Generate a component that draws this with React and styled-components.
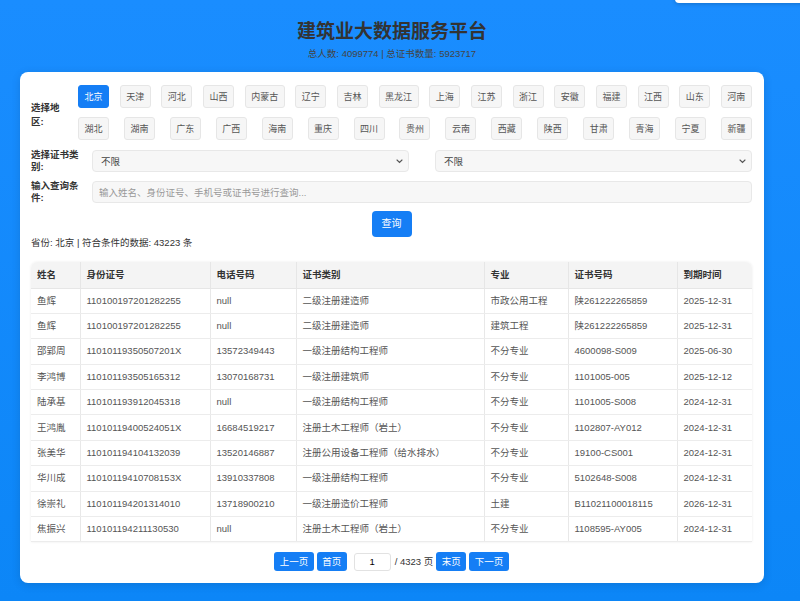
import styled, { createGlobalStyle } from 'styled-components';

const GlobalStyle = createGlobalStyle`
  html, body {
    margin: 0;
    padding: 0;
  }
  body {
    font-family: "Liberation Sans", "Noto Sans CJK SC", sans-serif;
    background: linear-gradient(180deg, #1a8dff 0%, #0c86f7 100%);
    min-height: 601px;
    overflow: hidden;
  }
  * {
    box-sizing: border-box;
  }
`;

const Page = styled.div`
  width: 784px;
  padding: 18px 20px 0;
`;

const Toast = styled.div`
  position: fixed;
  top: -30px;
  right: -10px;
  width: 135px;
  height: 33px;
  background: #fff;
  border-radius: 4px;
  box-shadow: 0 1px 4px rgba(0, 0, 0, 0.2);
`;

const Header = styled.header`
  text-align: center;
`;

const Title = styled.h1`
  margin: 0;
  font-size: 19px;
  line-height: 28px;
  font-weight: 700;
  color: #333;
`;

const Subtitle = styled.p`
  margin: 1px 0 0;
  font-size: 9.5px;
  line-height: 14px;
  color: #444;
`;

const Card = styled.main`
  margin-top: 11px;
  background: #fff;
  border-radius: 8px;
  box-shadow: 0 2px 10px rgba(0, 0, 0, 0.12);
  padding: 13px 12px 12px 11px;
`;

const FormRow = styled.div`
  display: flex;
  align-items: center;
  margin-bottom: ${(p) => p.$mb}px;
`;

const Label = styled.label`
  flex: 0 0 ${(p) => p.$w}px;
  margin-right: ${(p) => p.$gap}px;
  padding-top: ${(p) => p.$pt || 0}px;
  font-size: 9.5px;
  line-height: ${(p) => p.$lh || 12}px;
  font-weight: 700;
  color: #333;
`;

const RegionList = styled.div`
  flex: 1;
  display: flex;
  flex-wrap: wrap;
  justify-content: space-between;
  gap: 9px 9.5px;
`;

const RegionButton = styled.button`
  height: 23px;
  padding: 0 5.5px;
  font-family: inherit;
  font-size: 9px;
  border-radius: 3px;
  border: 1px solid ${(p) => (p.$active ? '#157ef5' : '#e6e6e6')};
  background: ${(p) => (p.$active ? '#157ef5' : '#f6f6f6')};
  color: ${(p) => (p.$active ? '#fff' : '#555')};
  cursor: pointer;
`;

const SelectGroup = styled.div`
  flex: 1;
  display: flex;
  gap: 26px;
`;

const SelectBox = styled.div`
  position: relative;
  flex: 1;
  height: 22px;
  display: flex;
  align-items: center;
  padding-left: 8px;
  background: #f7f7f7;
  border: 1px solid #e8e8e8;
  border-radius: 4px;
  font-size: 9.5px;
  color: #444;

  svg {
    position: absolute;
    right: 5px;
    top: 8px;
  }
`;

const SearchInput = styled.input`
  flex: 1;
  height: 22px;
  padding: 0 6px;
  font-family: inherit;
  font-size: 9.5px;
  background: #f7f7f7;
  border: 1px solid #e8e8e8;
  border-radius: 4px;
  outline: none;

  &::placeholder {
    color: #999;
  }
`;

const SearchRow = styled.div`
  display: flex;
  justify-content: center;
`;

const PrimaryButton = styled.button`
  height: ${(p) => p.$h || 26}px;
  padding: 0 ${(p) => p.$px || 10}px;
  font-family: inherit;
  font-size: ${(p) => p.$fs || 10}px;
  line-height: 1;
  color: #fff;
  background: #157ef5;
  border: none;
  border-radius: ${(p) => p.$r || 4}px;
  cursor: pointer;
`;

const Summary = styled.div`
  font-size: 9.5px;
  line-height: 12px;
  color: #333;
`;

const TableWrap = styled.div`
  margin-top: 13px;
  border-radius: 6px 6px 0 0;
  overflow: hidden;
  box-shadow: 0 0 3px rgba(0, 0, 0, 0.08);
`;

const Table = styled.table`
  width: 100%;
  border-collapse: collapse;
  table-layout: fixed;
  font-size: 9.5px;
  line-height: 12px;
`;

const Th = styled.th`
  height: 26px;
  padding: 0 6px;
  text-align: left;
  font-weight: 700;
  color: #333;
  background: #f4f4f4;
  border-right: 1px solid #e6e6e6;
  border-bottom: 1px solid #e6e6e6;

  &:last-child {
    border-right: none;
  }
`;

const Td = styled.td`
  height: 25.4px;
  padding: 0 6px;
  color: #555;
  white-space: nowrap;
  border-right: 1px solid #e8e8e8;
  border-bottom: 1px solid #ececec;
`;

const Pager = styled.div`
  display: flex;
  justify-content: center;
  align-items: center;
  gap: 3px;
  margin-top: 10px;
  font-size: 9.5px;
  line-height: 12px;
  color: #333;
`;

const PageInput = styled.input`
  width: 37px;
  height: 18px;
  margin: 0 1px 0 4px;
  padding: 0;
  text-align: center;
  font-family: inherit;
  font-size: 9.5px;
  border: 1px solid #e2e2e2;
  border-radius: 3px;
  outline: none;
`;

const regions = [
  '北京', '天津', '河北', '山西', '内蒙古', '辽宁', '吉林', '黑龙江', '上海', '江苏', '浙江',
  '安徽', '福建', '江西', '山东', '河南', '湖北', '湖南', '广东', '广西', '海南', '重庆',
  '四川', '贵州', '云南', '西藏', '陕西', '甘肃', '青海', '宁夏', '新疆',
];

const columns = [
  ['姓名', 49], ['身份证号', 130], ['电话号码', 86], ['证书类别', 188],
  ['专业', 84], ['证书号码', 109], ['到期时间', 75],
];

const rows = [
  ['鱼辉', '110100197201282255', 'null', '二级注册建造师', '市政公用工程', '陕261222265859', '2025-12-31'],
  ['鱼辉', '110100197201282255', 'null', '二级注册建造师', '建筑工程', '陕261222265859', '2025-12-31'],
  ['邵郢周', '11010119350507201X', '13572349443', '一级注册结构工程师', '不分专业', '4600098-S009', '2025-06-30'],
  ['李鸿博', '110101193505165312', '13070168731', '一级注册建筑师', '不分专业', '1101005-005', '2025-12-12'],
  ['陆承基', '110101193912045318', 'null', '一级注册结构工程师', '不分专业', '1101005-S008', '2024-12-31'],
  ['王鸿胤', '11010119400524051X', '16684519217', '注册土木工程师（岩土）', '不分专业', '1102807-AY012', '2024-12-31'],
  ['张美华', '110101194104132039', '13520146887', '注册公用设备工程师（给水排水）', '不分专业', '19100-CS001', '2024-12-31'],
  ['华川成', '11010119410708153X', '13910337808', '一级注册结构工程师', '不分专业', '5102648-S008', '2024-12-31'],
  ['徐崇礼', '110101194201314010', '13718900210', '一级注册造价工程师', '土建', 'B11021100018115', '2026-12-31'],
  ['焦振兴', '110101194211130530', 'null', '注册土木工程师（岩土）', '不分专业', '1108595-AY005', '2024-12-31'],
];

function Chevron() {
  return (
    <svg width="7" height="5" viewBox="0 0 7 5" fill="none">
      <path d="M1 1l2.5 2.5L6 1" stroke="#555" strokeWidth="1.1" strokeLinecap="round" />
    </svg>
  );
}

export default function App() {
  return (
    <>
      <GlobalStyle />
      <Toast />
      <Page>
        <Header>
          <Title>建筑业大数据服务平台</Title>
          <Subtitle>总人数: 4099774 | 总证书数量: 5923717</Subtitle>
        </Header>
        <Card>
          <FormRow $mb={9}>
            <Label $w={40} $gap={7} $lh={14} $pt={4}>选择地区:</Label>
            <RegionList>
              {regions.map((r) => (
                <RegionButton key={r} $active={r === '北京'}>{r}</RegionButton>
              ))}
            </RegionList>
          </FormRow>
          <FormRow $mb={7}>
            <Label $w={50} $gap={11}>选择证书类别:</Label>
            <SelectGroup>
              <SelectBox>不限<Chevron /></SelectBox>
              <SelectBox>不限<Chevron /></SelectBox>
            </SelectGroup>
          </FormRow>
          <FormRow $mb={7}>
            <Label $w={50} $gap={11}>输入查询条件:</Label>
            <SearchInput placeholder="输入姓名、身份证号、手机号或证书号进行查询..." />
          </FormRow>
          <SearchRow>
            <PrimaryButton>查询</PrimaryButton>
          </SearchRow>
          <Summary>省份: 北京 | 符合条件的数据: 43223 条</Summary>
          <TableWrap>
            <Table>
              <colgroup>
                {columns.map(([name, w]) => (
                  <col key={name} style={{ width: w }} />
                ))}
              </colgroup>
              <thead>
                <tr>
                  {columns.map(([name]) => (
                    <Th key={name}>{name}</Th>
                  ))}
                </tr>
              </thead>
              <tbody>
                {rows.map((row, i) => (
                  <tr key={i}>
                    {row.map((cell, j) => (
                      <Td key={j}>{cell}</Td>
                    ))}
                  </tr>
                ))}
              </tbody>
            </Table>
          </TableWrap>
          <Pager>
            <PrimaryButton $h={19} $px={5.5} $fs={9.5} $r={3}>上一页</PrimaryButton>
            <PrimaryButton $h={19} $px={5.5} $fs={9.5} $r={3}>首页</PrimaryButton>
            <PageInput defaultValue="1" />
            <span>/ 4323 页</span>
            <PrimaryButton $h={19} $px={5.5} $fs={9.5} $r={3}>末页</PrimaryButton>
            <PrimaryButton $h={19} $px={5.5} $fs={9.5} $r={3}>下一页</PrimaryButton>
          </Pager>
        </Card>
      </Page>
    </>
  );
}
